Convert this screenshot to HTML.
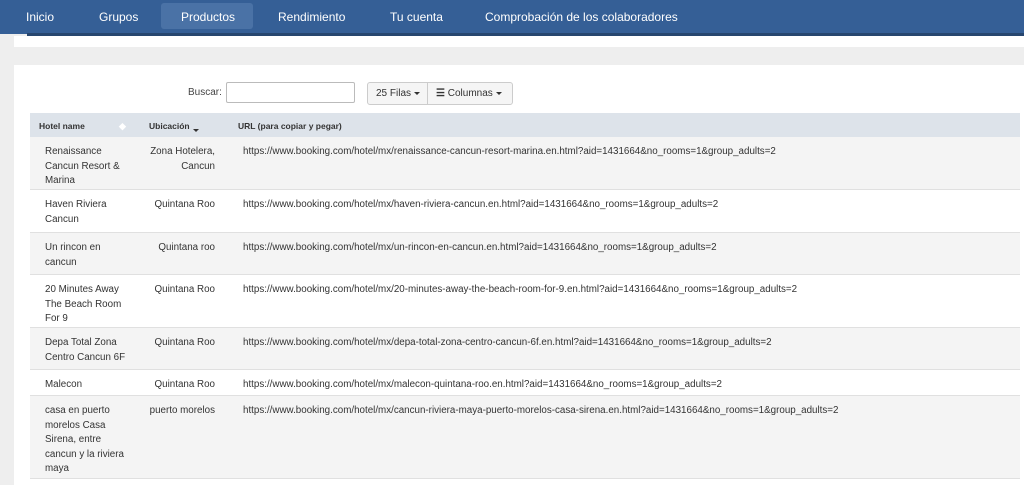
<!DOCTYPE html>
<html><head><meta charset="utf-8"><style>
*{margin:0;padding:0;box-sizing:border-box}
body{width:1024px;height:483px;overflow:hidden;background:#eeeeee;font-family:"Liberation Sans",sans-serif;color:#333;position:relative}
.nav{position:absolute;left:0;top:0;width:1024px;height:34px;background:#355f96}
.strip{position:absolute;left:27px;top:33px;width:997px;height:3px;background:#27466f}
.nav span{position:absolute;top:10px;color:#fff;font-size:12px}
.nav .act{position:absolute;left:161px;top:3px;width:92px;height:26px;background:#4a72a6;border-radius:3px}
.p1{position:absolute;left:14px;top:36px;width:1010px;height:11px;background:#fff}
.p2{position:absolute;left:14px;top:65px;width:1010px;height:420px;background:#fff}
.lbl{position:absolute;left:188px;top:87px;font-size:10px;color:#444}
.inp{position:absolute;left:226px;top:82px;width:129px;height:21px;border:1px solid #bbb;border-radius:2px}
.btn{position:absolute;top:82px;height:23px;border:1px solid #ccc;background:#f5f5f5;font-size:10px;line-height:21px;padding-left:8px;color:#333}
.car{display:inline-block;border-left:3px solid transparent;border-right:3px solid transparent;border-top:3px solid #333;vertical-align:middle;margin-left:3px}
.hdr{position:absolute;left:30px;top:113px;width:990px;height:24px;background:#dde3ea;font-size:8.5px;font-weight:bold;color:#333}
.hdr span{position:absolute;top:8px}
.row{position:absolute;left:30px;width:990px;border-bottom:1px solid #e0e0e0;font-size:9.8px;line-height:14.5px;color:#333}
.row .a{position:absolute;left:15px;top:8px;width:82px}
.row .b{position:absolute;right:805px;top:8px;text-align:right;width:80px}
.row .c{position:absolute;left:213px;top:8px;white-space:nowrap}
.g{background:#f4f4f4}.w{background:#fff}
</style></head><body>
<div class="nav"><div class="act"></div>
<span style="left:26px">Inicio</span><span style="left:99px">Grupos</span><span style="left:181px">Productos</span><span style="left:278px">Rendimiento</span><span style="left:390px">Tu cuenta</span><span style="left:485px">Comprobación de los colaboradores</span></div>
<div class="strip"></div>
<div class="p1"></div>
<div class="p2"></div>
<div class="lbl">Buscar:</div><div class="inp"></div>
<div class="btn" style="left:367px;width:61px;border-radius:3px 0 0 3px">25 Filas<span class="car"></span></div>
<div class="btn" style="left:427px;width:86px;border-radius:0 3px 3px 0"><span style="font-size:10px;font-weight:bold">&#9776;</span> Columnas<span class="car"></span></div>
<div class="hdr"><span style="left:9px">Hotel name</span><span style="left:89px;color:#fff;font-size:9px">&#9670;</span><span style="left:119px">Ubicación<span class="car"></span></span><span style="left:208px">URL (para copiar y pegar)</span></div>
<div class="row g" style="top:137px;height:53px"><div class="a">Renaissance Cancun Resort &amp; Marina</div><div class="b">Zona Hotelera, Cancun</div><div class="c">https://www.booking.com/hotel/mx/renaissance-cancun-resort-marina.en.html?aid=1431664&amp;no_rooms=1&amp;group_adults=2</div></div>
<div class="row w" style="top:190px;height:43px"><div class="a">Haven Riviera Cancun</div><div class="b">Quintana Roo</div><div class="c">https://www.booking.com/hotel/mx/haven-riviera-cancun.en.html?aid=1431664&amp;no_rooms=1&amp;group_adults=2</div></div>
<div class="row g" style="top:233px;height:42px"><div class="a">Un rincon en cancun</div><div class="b">Quintana roo</div><div class="c">https://www.booking.com/hotel/mx/un-rincon-en-cancun.en.html?aid=1431664&amp;no_rooms=1&amp;group_adults=2</div></div>
<div class="row w" style="top:275px;height:53px"><div class="a">20 Minutes Away The Beach Room For 9</div><div class="b">Quintana Roo</div><div class="c">https://www.booking.com/hotel/mx/20-minutes-away-the-beach-room-for-9.en.html?aid=1431664&amp;no_rooms=1&amp;group_adults=2</div></div>
<div class="row g" style="top:328px;height:42px"><div class="a">Depa Total Zona Centro Cancun 6F</div><div class="b">Quintana Roo</div><div class="c">https://www.booking.com/hotel/mx/depa-total-zona-centro-cancun-6f.en.html?aid=1431664&amp;no_rooms=1&amp;group_adults=2</div></div>
<div class="row w" style="top:370px;height:26px"><div class="a">Malecon</div><div class="b">Quintana Roo</div><div class="c">https://www.booking.com/hotel/mx/malecon-quintana-roo.en.html?aid=1431664&amp;no_rooms=1&amp;group_adults=2</div></div>
<div class="row g" style="top:396px;height:83px"><div class="a">casa en puerto morelos Casa Sirena, entre cancun y la riviera maya</div><div class="b" style="width:90px">puerto morelos</div><div class="c">https://www.booking.com/hotel/mx/cancun-riviera-maya-puerto-morelos-casa-sirena.en.html?aid=1431664&amp;no_rooms=1&amp;group_adults=2</div></div>
</body></html>
